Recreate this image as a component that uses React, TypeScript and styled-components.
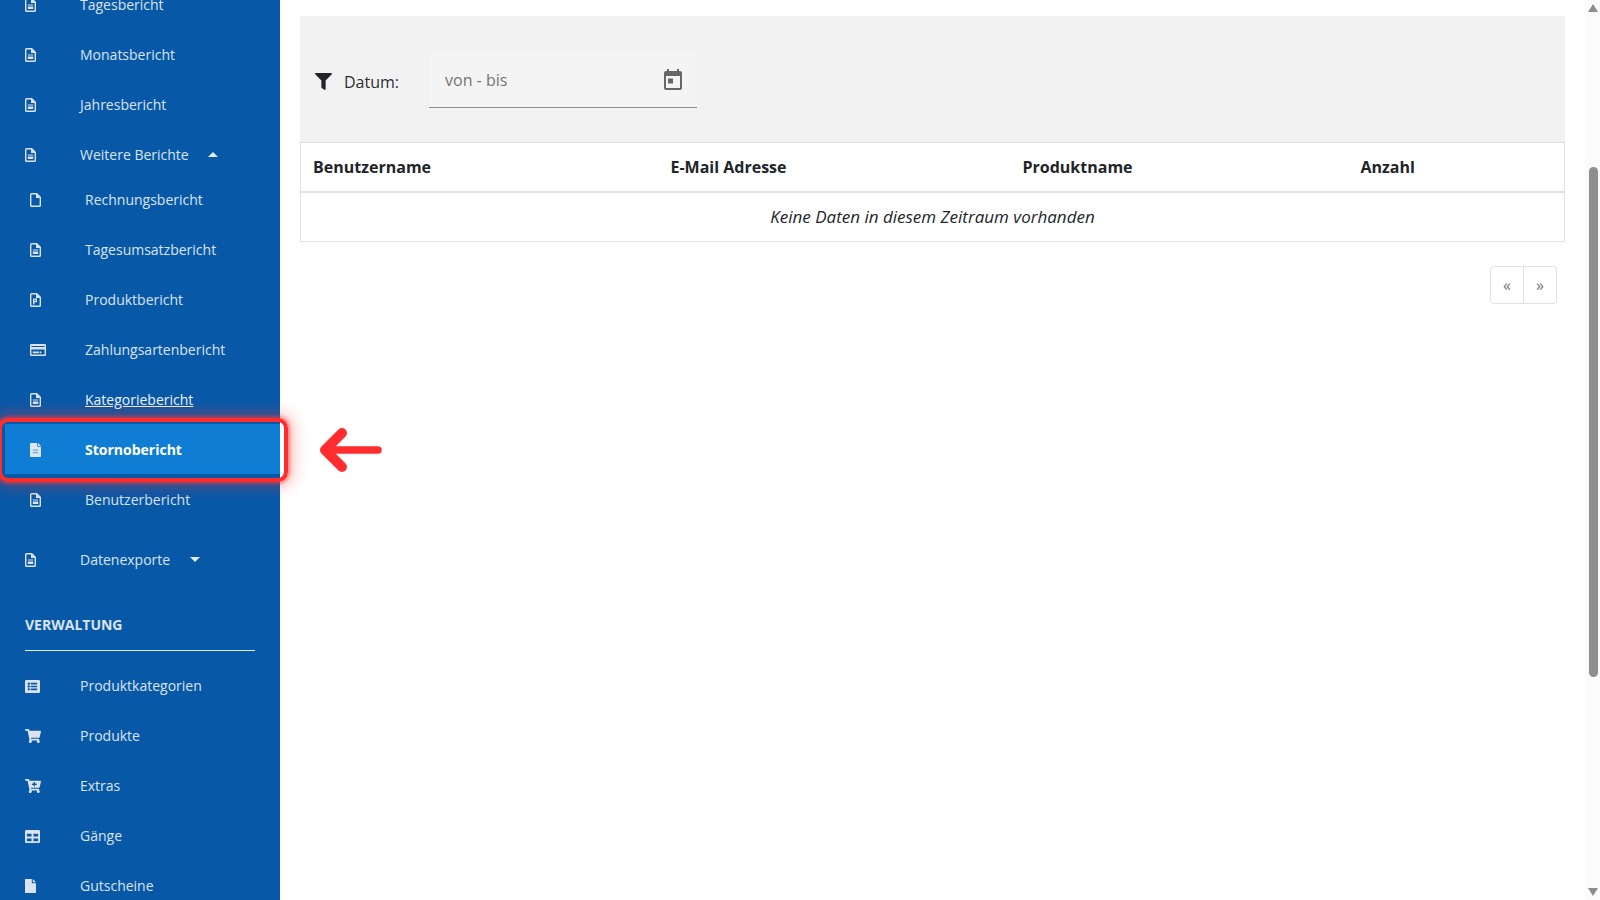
import React from "react";
import styled, { createGlobalStyle } from "styled-components";
import { FaFilter, FaShoppingCart, FaCartPlus, FaListAlt, FaTable } from "react-icons/fa";

const Global = createGlobalStyle`
  html, body { margin: 0; padding: 0; height: 100%; overflow: hidden; background: #fff; }
  body { font-family: "Open Sans", "Liberation Sans", sans-serif; color: #212529; }
  * { box-sizing: border-box; }
`;

const Page = styled.div`
  position: relative;
  display: grid;
  grid-template-columns: 280px 1fr 16px;
  height: 900px;
  overflow: hidden;
`;

const Sidebar = styled.nav`
  background: #0759a8;
  overflow: hidden;
  height: 900px;
`;

const Menu = styled.ul`
  list-style: none;
  margin: -21px 0 0;
  padding: 0;
`;

const SubMenu = styled.ul`
  list-style: none;
  margin: -5px 0 10px;
  padding: 0;
`;

const Row = styled.li<{ $sub?: boolean; $active?: boolean; $hover?: boolean }>`
  display: flex;
  align-items: center;
  height: 50px;
  margin-left: ${(p) => (p.$active ? "5px" : "0")};
  padding-left: ${(p) => (p.$active ? "25px" : p.$sub ? "30px" : "25px")};
  background: ${(p) => (p.$active ? "#0f7dd4" : "transparent")};
  color: ${(p) => (p.$active ? "#fff" : p.$hover ? "#f0f3f8" : "#dce3ee")};
  font-size: 14px;
  font-weight: ${(p) => (p.$active ? 700 : 400)};
  text-decoration: ${(p) => (p.$hover ? "underline" : "none")};
`;

const IconSlot = styled.span`
  display: flex;
  align-items: center;
  width: 55px;
  flex: none;
  padding-top: 2px;
  color: #dce3ee;
`;

const Caret = styled.span<{ $up?: boolean }>`
  width: 0;
  height: 0;
  margin-left: ${(p) => (p.$up ? "19px" : "20px")};
  border-left: 5px solid transparent;
  border-right: 5px solid transparent;
  border-top: ${(p) => (p.$up ? "none" : "5px solid #e6ebf2")};
  border-bottom: ${(p) => (p.$up ? "5px solid #e6ebf2" : "none")};
`;

const SectionTitle = styled.li`
  margin: 0 25px 9px;
  padding: 31px 0 15px;
  border-bottom: 1px solid #e8edf4;
  color: #dce3ee;
  font-size: 14px;
  line-height: 20px;
  font-weight: 700;
  text-transform: uppercase;
`;

const Main = styled.main`
  padding: 16px 20px 0 20px;
`;

const FilterPanel = styled.section`
  display: flex;
  align-items: flex-start;
  height: 126px;
  padding: 36px 0 0 15px;
  background: #f2f2f2;
`;

const FilterLabel = styled.label`
  display: flex;
  align-items: center;
  gap: 12px;
  height: 56px;
  padding-top: 3px;
  margin-right: 30px;
  font-size: 16px;
  color: #2b2f33;
`;

const DateField = styled.div`
  display: flex;
  align-items: center;
  justify-content: space-between;
  width: 268px;
  height: 56px;
  padding: 0 12px 0 16px;
  background: #f4f4f4;
  border-bottom: 1px solid #8c8c8c;
  color: #757575;
  font-size: 16px;
  border-radius: 4px 4px 0 0;
`;

const DataTable = styled.table`
  width: 100%;
  table-layout: fixed;
  border-collapse: collapse;
  border: 1px solid #dee2e6;
  font-size: 16px;
`;

const HeadCell = styled.th<{ $w: number }>`
  width: ${(p) => p.$w}px;
  height: 49px;
  padding: 0 12px;
  text-align: left;
  font-weight: 700;
  color: #212529;
  border-bottom: 2px solid #dee2e6;
`;

const EmptyCell = styled.td`
  height: 50px;
  padding: 0 12px;
  text-align: center;
  font-size: 17px;
  font-style: italic;
  color: #212529;
`;

const Pager = styled.div`
  display: flex;
  justify-content: flex-end;
  margin: 24px 8px 0 0;
`;

const PageButton = styled.button<{ $first?: boolean }>`
  width: ${(p) => (p.$first ? "34px" : "33px")};
  height: 38px;
  padding: 0;
  background: #fff;
  border: 1px solid #dee2e6;
  border-left: ${(p) => (p.$first ? "1px solid #dee2e6" : "none")};
  border-radius: ${(p) => (p.$first ? "4px 0 0 4px" : "0 4px 4px 0")};
  color: #6c757d;
  font-family: inherit;
  font-size: 16px;
`;

const ScrollTrack = styled.div`
  display: flex;
  flex-direction: column;
  align-items: center;
  height: 900px;
  padding-top: 4px;
  background: #fbfbfb;
`;

const ScrollUp = styled.span`
  width: 0;
  height: 0;
  border-left: 5px solid transparent;
  border-right: 5px solid transparent;
  border-bottom: 8px solid #8c8c8c;
`;

const ScrollDown = styled.span`
  width: 0;
  height: 0;
  margin-top: 211px;
  border-left: 5px solid transparent;
  border-right: 5px solid transparent;
  border-top: 8px solid #8c8c8c;
`;

const ScrollThumb = styled.div`
  width: 9px;
  height: 510px;
  margin-top: 155px;
  border-radius: 5px;
  background: #8e8e8e;
`;

const Highlight = styled.div`
  position: absolute;
  left: -2px;
  top: 418px;
  width: 290px;
  height: 64px;
  border: 4px solid #ff2d2d;
  border-radius: 10px;
  box-shadow: 0 0 3px 2px rgba(255, 60, 60, 0.5), 0 0 16px 4px rgba(255, 45, 45, 0.38);
  pointer-events: none;
`;

const ArrowMark = styled.svg`
  position: absolute;
  left: 319px;
  top: 426px;
  width: 64px;
  height: 48px;
`;

const Doc = () => (
  <svg width="11" height="14" viewBox="0 0 11 14" fill="currentColor">
    <path
      fillRule="evenodd"
      d="M1.500 0H7l4 4v8.500a1.500 1.500 0 0 1-1.500 1.500h-8A1.500 1.500 0 0 1 0 12.500v-11A1.500 1.500 0 0 1 1.500 0zM1.400 1.400v11.200h8.200V5H6V1.400z"
    />
    <path d="M2.800 6.400h5.400v1.200H2.800zM2.800 8.400h5.400v2.600H2.800z" />
  </svg>
);

const DocOutline = () => (
  <svg width="11" height="14" viewBox="0 0 11 14" fill="currentColor">
    <path
      fillRule="evenodd"
      d="M1.500 0H7l4 4v8.500a1.500 1.500 0 0 1-1.500 1.500h-8A1.500 1.500 0 0 1 0 12.500v-11A1.500 1.500 0 0 1 1.500 0zM1.400 1.400v11.200h8.200V5H6V1.400z"
    />
  </svg>
);

const DocFilled = () => (
  <svg width="11" height="14" viewBox="0 0 11 14" fill="currentColor">
    <path d="M0 0h6.800v4.200H11V14H0zM7.800 0L11 3.200H7.800z" />
  </svg>
);

const DocP = () => (
  <svg width="11" height="14" viewBox="0 0 11 14" fill="currentColor">
    <path
      fillRule="evenodd"
      d="M1.500 0H7l4 4v8.500a1.500 1.500 0 0 1-1.500 1.500h-8A1.500 1.500 0 0 1 0 12.500v-11A1.500 1.500 0 0 1 1.500 0zM1.400 1.400v11.200h8.200V5H6V1.400z"
    />
    <path fillRule="evenodd" d="M3 5.600h4v3.600H4.400v2.200H3zM4.400 6.800v1.200h1.300V6.800z" />
  </svg>
);

const DocSolid = () => (
  <svg width="11" height="14" viewBox="0 0 11 14">
    <path fill="#dfe6ee" d="M1 0h6.200v3.800H11V13a1 1 0 0 1-1 1H1a1 1 0 0 1-1-1V1a1 1 0 0 1 1-1z" />
    <path fill="#dfe6ee" d="M8 0l3 3H8z" />
    <path fill="#6fa9dd" d="M2.800 6.600h5.400v1.200H2.800zM2.800 9h5.400v1.200H2.800z" />
  </svg>
);

const Card = () => (
  <svg width="16" height="12" viewBox="0 0 16 12" fill="currentColor">
    <path
      fillRule="evenodd"
      d="M1.200 0h13.600A1.200 1.200 0 0 1 16 1.200v9.600a1.200 1.200 0 0 1-1.200 1.200H1.200A1.200 1.200 0 0 1 0 10.800V1.200A1.200 1.200 0 0 1 1.200 0zM1.400 2v1h13.200V2zM1.400 5.400v5.200h13.200V5.400z"
    />
    <path d="M2.800 7.600h6v1.600h-6zM9.600 7.600h1.800v1.600H9.600z" />
  </svg>
);

const Calendar = () => (
  <svg width="24" height="24" viewBox="0 0 24 24" fill="#666">
    <path
      fillRule="evenodd"
      d="M5 3h1V1h2v2h8V1h2v2h1a2 2 0 0 1 2 2v15a2 2 0 0 1-2 2H5a2 2 0 0 1-2-2V5a2 2 0 0 1 2-2zm0 5v12h14V8z"
    />
    <path d="M7 10.500h5v5H7z" />
  </svg>
);

const topReports = ["Tagesbericht", "Monatsbericht", "Jahresbericht"];
const subReports: { label: string; icon: React.ReactNode; hover?: boolean; active?: boolean }[] = [
  { label: "Rechnungsbericht", icon: <DocOutline /> },
  { label: "Tagesumsatzbericht", icon: <Doc /> },
  { label: "Produktbericht", icon: <DocP /> },
  { label: "Zahlungsartenbericht", icon: <Card /> },
  { label: "Kategoriebericht", icon: <Doc />, hover: true },
  { label: "Stornobericht", icon: <DocSolid />, active: true },
  { label: "Benutzerbericht", icon: <Doc /> },
];
const adminItems: { label: string; icon: React.ReactNode }[] = [
  { label: "Produktkategorien", icon: <FaListAlt size={15} /> },
  { label: "Produkte", icon: <FaShoppingCart size={16} /> },
  { label: "Extras", icon: <FaCartPlus size={16} /> },
  { label: "Gänge", icon: <FaTable size={15} /> },
  { label: "Gutscheine", icon: <DocFilled /> },
];
const columns = [
  { label: "Benutzername", w: 358 },
  { label: "E-Mail Adresse", w: 352 },
  { label: "Produktname", w: 338 },
  { label: "Anzahl", w: 216 },
];

export default function App() {
  return (
    <Page>
      <Global />
      <Sidebar>
        <Menu>
          {topReports.map((label) => (
            <Row key={label}>
              <IconSlot><Doc /></IconSlot>
              {label}
            </Row>
          ))}
          <Row>
            <IconSlot><Doc /></IconSlot>
            Weitere Berichte
            <Caret $up />
          </Row>
          <li>
            <SubMenu>
              {subReports.map((r) => (
                <Row key={r.label} $sub $hover={r.hover} $active={r.active}>
                  <IconSlot>{r.icon}</IconSlot>
                  {r.label}
                </Row>
              ))}
            </SubMenu>
          </li>
          <Row>
            <IconSlot><Doc /></IconSlot>
            Datenexporte
            <Caret />
          </Row>
          <SectionTitle>Verwaltung</SectionTitle>
          {adminItems.map((r) => (
            <Row key={r.label}>
              <IconSlot>{r.icon}</IconSlot>
              {r.label}
            </Row>
          ))}
        </Menu>
      </Sidebar>
      <Main>
        <FilterPanel>
          <FilterLabel>
            <FaFilter size={17} color="#212529" />
            Datum:
          </FilterLabel>
          <DateField>
            von - bis
            <Calendar />
          </DateField>
        </FilterPanel>
        <DataTable>
          <thead>
            <tr>
              {columns.map((c) => (
                <HeadCell key={c.label} $w={c.w}>{c.label}</HeadCell>
              ))}
            </tr>
          </thead>
          <tbody>
            <tr>
              <EmptyCell colSpan={4}>Keine Daten in diesem Zeitraum vorhanden</EmptyCell>
            </tr>
          </tbody>
        </DataTable>
        <Pager>
          <PageButton $first>«</PageButton>
          <PageButton>»</PageButton>
        </Pager>
      </Main>
      <ScrollTrack>
        <ScrollUp />
        <ScrollThumb />
        <ScrollDown />
      </ScrollTrack>
      <Highlight />
      <ArrowMark viewBox="0 0 64 48" fill="none" stroke="#ff2d2d" strokeLinecap="round" strokeLinejoin="round">
        <path d="M6 24h53" strokeWidth="7.5" />
        <path d="M23 7L6 24l17 17" strokeWidth="10" />
      </ArrowMark>
    </Page>
  );
}
